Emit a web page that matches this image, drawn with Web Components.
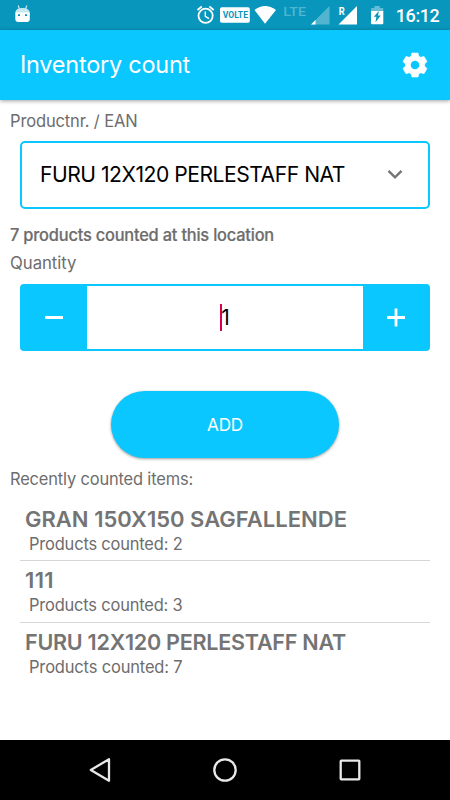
<!DOCTYPE html>
<html lang="en">
<head>
<meta charset="utf-8">
<title>Inventory count</title>
<style>
html,body{margin:0;height:100%;background:#fff}
body{font-family:Inter,Roboto,"Liberation Sans",sans-serif;color:#6d6d6d}
</style>
</head>
<body>
<inventory-app></inventory-app>
<script>
const define=(name,html,setup)=>{
  const t=document.createElement('template');
  t.innerHTML=html;
  customElements.define(name,class extends HTMLElement{
    constructor(){super();this.attachShadow({mode:'open'}).append(t.content.cloneNode(true));}
    connectedCallback(){if(setup)setup(this);}
  });
};

define('text-line',`<style>:host{display:block;white-space:nowrap;height:var(--h,22px);line-height:var(--h,22px)}span{display:inline-block;transform-origin:0 50%}</style><span><slot></slot></span>`,el=>{
  const want=+el.getAttribute('fit');
  if(!want)return;
  const s=el.shadowRoot.querySelector('span');
  const n=s.firstChild.assignedNodes({flatten:true}).map(x=>x.textContent).join('').length;
  const w=s.getBoundingClientRect().width;
  if(!n||!w)return;
  const k=Math.min(1,Math.sqrt(want/w));
  s.style.letterSpacing=((want/k-w)/n).toFixed(3)+'px';
  if(k<1)s.style.transform='scaleX('+k.toFixed(4)+')';
  el.style.width=want+'px';
});

define('status-bar',`<style>:host{display:block;height:30px;background:#0896bd}svg{display:block}</style>
<svg width="450" height="30" viewBox="0 0 450 30" fill="#fff">
<g opacity=".78"><path d="M15.3 13q.2-5 7.2-5t7.3 5z"/><path d="M18.2 5.5l1.4 4M26.8 5.5l-1.4 4" stroke="#fff" stroke-width="1.2"/></g>
<path fill-rule="evenodd" d="M15.3 12.5H29.8V19Q29.8 22 26.8 22H18.3Q15.3 22 15.3 19ZM18 14.2V16H20V14.2ZM25 14.2V16H27V14.2Z"/>
<g fill="none" stroke="#fff" stroke-width="1.8"><circle cx="205.6" cy="15.8" r="7.1"/><path d="M205.3 11.5V16.3L209 18.6" stroke-width="1.4"/><path d="M197.5 10l4.3-3.5M213.7 10l-4.3-3.5"/></g>
<rect x="220" y="7.3" width="29.8" height="15.4" rx="1.8"/>
<text x="222.7" y="18.4" font-family="Roboto" font-weight="700" font-size="9.2" textLength="25.3" lengthAdjust="spacingAndGlyphs" fill="#0896bd">VOLTE</text>
<path d="M254.5 10Q265 1.8 276 10L265 23.8Z"/>
<text x="283.2" y="15.8" font-family="Roboto" font-weight="500" font-size="13" textLength="22.8" lengthAdjust="spacingAndGlyphs" fill="#52b5d0">LTE</text>
<path d="M329.5 6V24.5H311Z" fill="#52b5d0"/><path d="M315.5 20V24.5H311Z"/>
<text x="338.8" y="15" font-family="Roboto" font-weight="700" font-size="10.5" textLength="6" lengthAdjust="spacingAndGlyphs">R</text>
<path d="M357 6V24.5H338.5Z"/>
<path d="M374.4 6h5.3v2h3.5v4h-12V8h3.2z" fill="#65bdd5"/>
<path fill-rule="evenodd" d="M371 11H383.3V23.3Q383.3 24.3 382.3 24.3H372Q371 24.3 371 23.3ZM379 10.8L373.8 16.7H376.4L375.5 22.3L380.8 15.5H378Z"/>
<text x="395.8" y="22" font-family="Roboto" font-weight="500" font-size="18" textLength="44">16:12</text>
</svg>`);

define('app-header',`<style>:host{display:flex;align-items:center;justify-content:space-between;box-sizing:border-box;height:70px;padding:0 22px 0 20px;background:#0ac7ff;color:#fff;box-shadow:0 1px 4px rgba(0,0,0,.38);font-size:24px}
svg{display:block}text-line{--h:30px}</style>
<text-line fit="170"><slot></slot></text-line>
<svg width="26" height="26" viewBox="402 52 26 26"><path d="M412 53h6l.8 3.2 2 1.1 3.2-.9 3 5.2-2.4 2.3v2.3l2.4 2.3-3 5.2-3.2-.9-2 1.1L418 77h-6l-.8-3.1-2-1.1-3.2.9-3-5.2 2.4-2.3v-2.3l-2.4-2.3 3-5.2 3.2.9 2-1.1Z" fill="#fff" stroke="#fff" stroke-width=".6" stroke-linejoin="round"/><circle cx="415" cy="65" r="4.3" fill="#0ac7ff"/></svg>`);

define('product-select',`<style>:host{display:flex;align-items:center;justify-content:space-between;box-sizing:border-box;height:68px;margin:0 20px;padding:0 24px 2px 18px;border:2px solid #0ac7ff;border-radius:5px;color:#000;font-size:22px}text-line{--h:30px}svg{display:block}</style>
<text-line fit="305"><slot></slot></text-line>
<svg width="18" height="12" viewBox="0 0 18 12"><path d="M2.5 2.8L9 9.3l6.5-6.5" fill="none" stroke="#757575" stroke-width="2.4"/></svg>`);

define('quantity-stepper',`<style>:host{display:grid;grid-template-columns:65px 1fr 65px;box-sizing:border-box;height:67px;margin:0 20px;border:2px solid #0ac7ff;border-radius:4px;background:#0ac7ff;overflow:hidden}
.b{display:grid;place-items:center}.b:first-of-type{padding-right:2px}.v{display:flex;align-items:center;justify-content:center;background:#fff;color:#000;font-size:21px}
i{width:2px;height:27px;background:#d8004f}span{margin-left:-1px}svg{display:block}</style>
<div class="b"><svg width="20" height="20"><path d="M1 9.5H19" stroke="#fff" stroke-width="3"/></svg></div>
<div class="v"><i></i><span><slot></slot></span></div>
<div class="b"><svg width="20" height="20"><path d="M1 9.5H19M10 .5V18.5" stroke="#fff" stroke-width="2.8"/></svg></div>`);

define('pill-button',`<style>:host{display:grid;place-items:center;width:228px;height:67px;margin:0 auto;border-radius:34px;background:#0ac7ff;color:#fff;font-size:17.5px;box-shadow:0 1px 3px rgba(0,0,0,.4)}</style><text-line fit="36"><slot></slot></text-line>`);

customElements.define('count-row',class extends HTMLElement{
  constructor(){super();this.attachShadow({mode:'open'});}
  connectedCallback(){
    const a=n=>this.getAttribute(n);
    this.shadowRoot.innerHTML=`<style>:host{display:block;box-sizing:border-box;height:61.3px;margin:0 20px;padding:5px 5px 0;border-bottom:1px solid #d6d6d6}:host([last]){border:0}
.t{font-size:22px;font-weight:600;color:#747474;--h:28px}.c{margin:1px 0 0 3.5px;font-size:16.8px;--h:20px}</style>
<text-line class="t" fit="${a('fit')}">${a('name')}</text-line><text-line class="c" fit="153.5">Products counted: ${a('count')}</text-line>`;
  }
});

define('nav-bar',`<style>:host{display:flex;justify-content:space-between;align-items:center;box-sizing:border-box;height:60px;padding:0 87px;background:#000;margin-top:auto}</style>
<svg width="26" height="26"><path d="M22 2.2V23.8L3.8 13Z" fill="none" stroke="#e8e8e8" stroke-width="2.3" stroke-linejoin="round"/></svg>
<svg width="26" height="26"><circle cx="13" cy="13" r="10.7" fill="none" stroke="#e8e8e8" stroke-width="2.3"/></svg>
<svg width="26" height="26"><rect x="3.7" y="3.7" width="18.6" height="18.6" rx=".6" fill="none" stroke="#e8e8e8" stroke-width="2.3"/></svg>`);

define('inventory-app',`<style>:host{display:flex;flex-direction:column;width:450px;height:800px;background:#fff;overflow:hidden;font-size:16.8px}
.l{margin-left:10px}</style>
<status-bar></status-bar>
<app-header>Inventory count</app-header>
<text-line class="l" fit="127.5" style="margin-top:10px">Productnr. / EAN</text-line>
<product-select style="margin-top:9px">FURU 12X120 PERLESTAFF NAT</product-select>
<text-line class="l" fit="264" style="margin-top:15px;font-weight:500;-webkit-text-stroke:.2px">7 products counted at this location</text-line>
<text-line class="l" fit="66.5" style="margin-top:6px">Quantity</text-line>
<quantity-stepper style="margin-top:10px">1</quantity-stepper>
<pill-button style="margin-top:40px">ADD</pill-button>
<text-line class="l" fit="183" style="margin-top:10px">Recently counted items:</text-line>
<count-row name="GRAN 150X150 SAGFALLENDE" count="2" fit="322" style="margin-top:10px"></count-row>
<count-row name="111" count="3" fit="29"></count-row>
<count-row name="FURU 12X120 PERLESTAFF NAT" count="7" fit="321" last></count-row>
<nav-bar></nav-bar>`);
</script>
</body>
</html>
